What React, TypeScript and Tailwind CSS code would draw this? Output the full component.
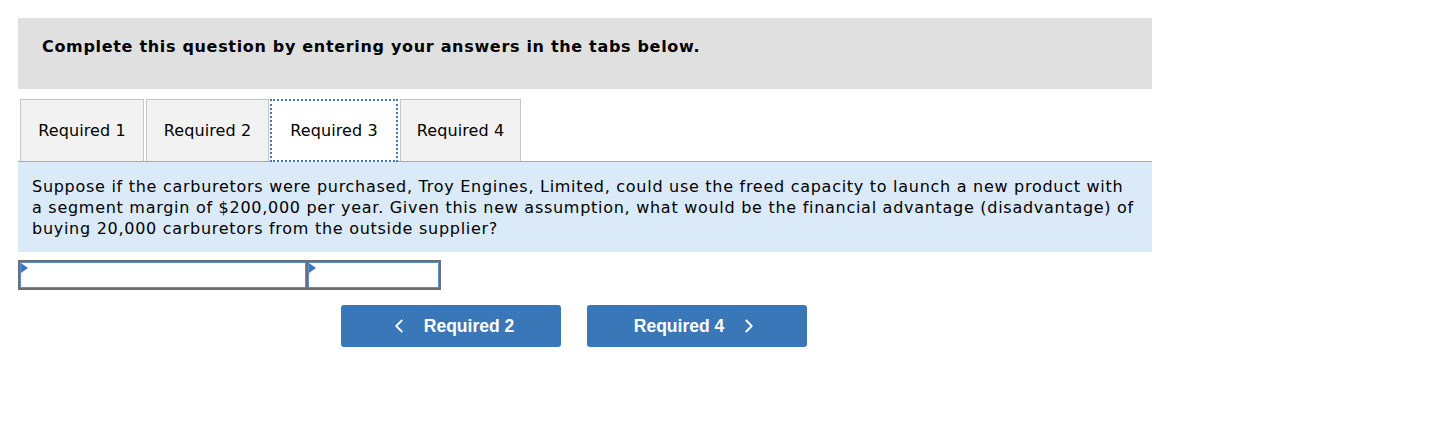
import { ChevronLeft, ChevronRight } from 'lucide-react';

const Cell = ({ width }: { width: string }) => (
  <div className={`relative h-[26px] ${width} border border-[#5b8fd4] bg-white`}>
    <div className="absolute left-0 top-0 h-0 w-0 border-y-[5px] border-l-[7px] border-y-transparent border-l-[#3f76c2]"></div>
  </div>
);

const Tab = ({ label, className }: { label: string; className: string }) => (
  <div
    className={`h-[62px] bg-[#f2f2f2] border border-b-0 border-[#c6c6c6] flex items-center justify-center text-[16px] tracking-[0.1px] ${className}`}
  >
    {label}
  </div>
);

export default function App() {
  return (
    <div className="min-h-[432px] bg-white font-['DejaVu_Sans',Verdana,sans-serif] text-black">
      <div className="w-[1134px] ml-[18px] pt-[18px]">
        {/* Instructions */}
        <div className="h-[71px] bg-[#e0e0e0] pl-[24px] flex items-center pb-[13px]">
          <p className="text-[16px] font-bold tracking-[0.68px]">Complete this question by entering your answers in the tabs below.</p>
        </div>

        {/* Tabs */}
        <div className="mt-[10px] flex items-end border-b border-[#a8a8a8] pl-[2px]">
          <Tab label="Required 1" className="w-[124px]" />
          <Tab label="Required 2" className="w-[123px] ml-[2px]" />
          <div className="h-[63px] w-[128px] ml-px -mb-px bg-white border-2 border-dotted border-[#3d78c0] flex items-center justify-center text-[16px] tracking-[0.1px]">
            Required 3
          </div>
          <Tab label="Required 4" className="w-[121px] ml-[2px]" />
        </div>

        {/* Question */}
        <div className="bg-[#dbeaf8] pl-[14px] pr-[6px] pt-[14px] pb-[13px] text-[16px] leading-[21px] tracking-[0.72px]">
          Suppose if the carburetors were purchased, Troy Engines, Limited, could use the freed capacity to launch a new product with
          <br />
          a segment margin of $200,000 per year. Given this new assumption, what would be the financial advantage (disadvantage) of
          <br />
          buying 20,000 carburetors from the outside supplier?
        </div>

        {/* Answer row */}
        <div className="mt-[8px] flex w-fit border-2 border-[#6e6e6e] bg-[#6e6e6e] gap-[2px]">
          <Cell width="w-[286px]" />
          <Cell width="w-[131px]" />
        </div>

        {/* Nav buttons */}
        <div className="mt-[15px] flex gap-[26px] pl-[323px] font-['Liberation_Sans',Arial,sans-serif]">
          <button className="h-[42px] w-[220px] rounded-[3px] bg-[#3a77b9] text-white text-[17.5px] font-bold flex items-center justify-center gap-[14px]">
            <ChevronLeft size={22} strokeWidth={2} />
            <span>Required 2</span>
          </button>
          <button className="h-[42px] w-[220px] rounded-[3px] bg-[#3a77b9] text-white text-[17.5px] font-bold flex items-center justify-center gap-[14px]">
            <span>Required 4</span>
            <ChevronRight size={22} strokeWidth={2} />
          </button>
        </div>
      </div>
    </div>
  );
}
